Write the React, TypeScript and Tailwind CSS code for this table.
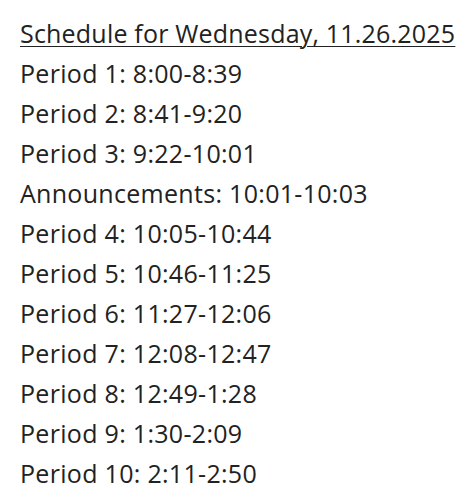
const rows = [
  'Period 1: 8:00-8:39',
  'Period 2: 8:41-9:20',
  'Period 3: 9:22-10:01',
  'Announcements: 10:01-10:03',
  'Period 4: 10:05-10:44',
  'Period 5: 10:46-11:25',
  'Period 6: 11:27-12:06',
  'Period 7: 12:08-12:47',
  'Period 8: 12:49-1:28',
  'Period 9: 1:30-2:09',
  'Period 10: 2:11-2:50',
]

export default function App() {
  return (
    <div className="w-[470px] h-[502px] bg-white pt-[13px] pl-[20px] text-[#222] text-[25px] leading-[40px] tracking-[0.3px] font-['Open_Sans',sans-serif]">
      <p className="underline decoration-1 underline-offset-[3px] tracking-[0.2px]">Schedule for Wednesday, 11.26.2025</p>
      {rows.map((r) => (
        <p key={r}>{r}</p>
      ))}
    </div>
  )
}
